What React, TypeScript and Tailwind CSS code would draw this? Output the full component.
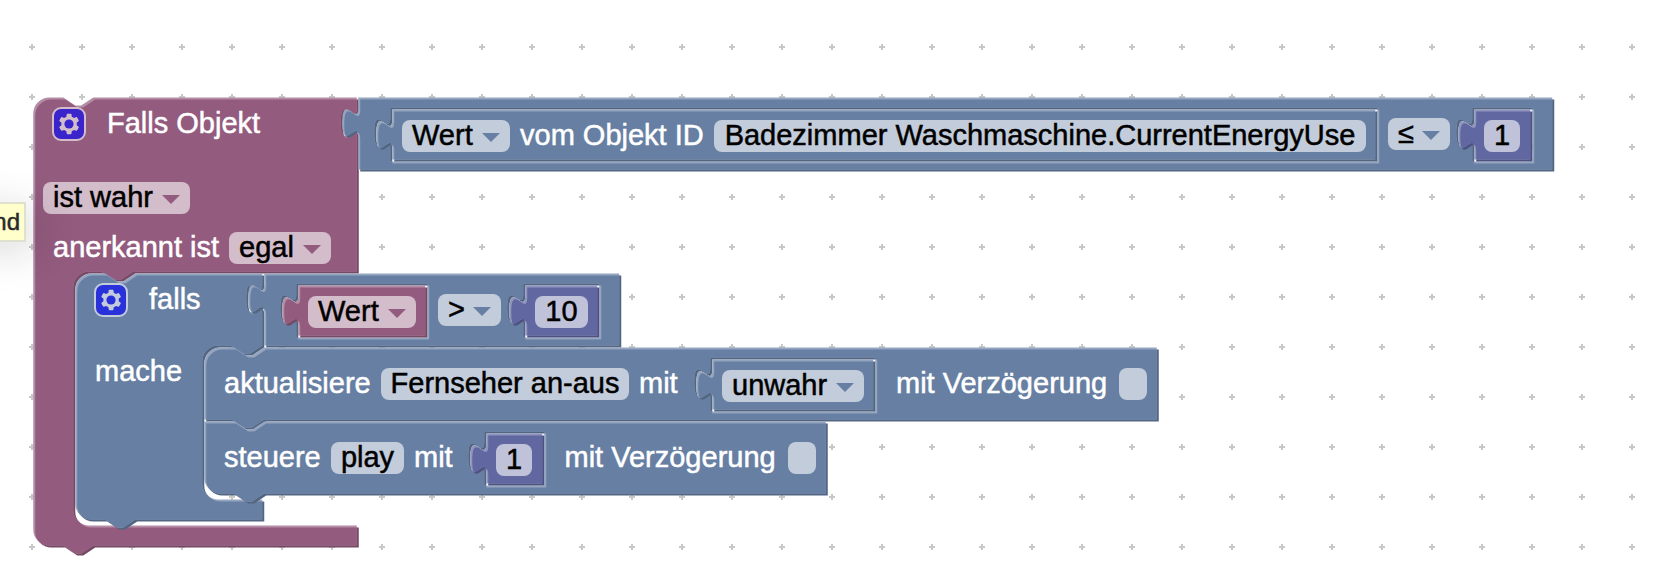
import { useId } from "react"
import type { ReactNode } from "react"

const palette = {
  trigger: { base: "#935b7e", light: "#b38ca5", dark: "#764965" },
  logic: { base: "#677fa3", light: "#95a5bf", dark: "#526682" },
  math: { base: "#6067a1", light: "#9095bd", dark: "#4d5281" },
}

type Tone = keyof typeof palette

// shape fragments, shared by every block outline
const NOTCH_RIGHT = "l12,8 h6 l12,-8"
const NOTCH_LEFT = "l-12,8 h-6 l-12,-8"
// 2px wider, closes the gap to a block docked underneath
const NOTCH_SEAM = "l-12,8 h-8 l-12,-8"
const TAB_DOWN = "c0,20 -16,-16 -16,15 s16,-5 16,15"
const TAB_UP = "c0,-20 -16,16 -16,-15 s16,5 16,-15"

const valuePath = (w: number, h: number) =>
  `M0,0 H${w} V${h} H0 V40 ${TAB_UP} Z`

// hole for an inline value block placed at x,y
const holePath = (x: number, y: number, w: number, h = 50) =>
  `M${x - 2},${y - 2} v10 ${TAB_DOWN} v${h - 36} h${w + 4} v${-(h + 4)} Z`

// block wrapping a statement list
const wrapPath = (w: number, top: number, bottom: number, left: number) =>
  `M0,16 A16,16 0 0 1 16,0 H30 ${NOTCH_RIGHT} H${w} V10 ${TAB_DOWN} V${top} H${left + 60} ${NOTCH_SEAM} h-12 a16,16 0 0 0 -16,16 V${bottom - 16} a16,16 0 0 0 16,16 H${w} v20 H60 ${NOTCH_LEFT} H16 a16,16 0 0 1 -16,-16 Z`

interface BlockProps {
  tone: Tone
  d: string
  className: string
  children?: ReactNode
}

const Block = ({ tone, d, className, children }: BlockProps) => {
  const id = useId()
  const { base, light, dark } = palette[tone]

  return (
    <div className={`absolute ${className}`}>
      <svg width="1" height="1" className="absolute left-0 top-0 overflow-visible">
        <clipPath id={id}>
          <path d={d} clipRule="evenodd" />
        </clipPath>
        <g transform="translate(-0.75 -0.5)" fillRule="evenodd">
          <path d={d} fill={dark} transform="translate(2 2)" />
          <path d={d} fill={light} />
          <g clipPath={`url(#${id})`}>
            <path d={d} fill={base} transform="translate(2 2)" />
          </g>
        </g>
      </svg>
      <div className="relative w-max">{children}</div>
    </div>
  )
}

const Label = ({ children, className = "" }: { children: string; className?: string }) => (
  <span className={`h-8 whitespace-nowrap pl-px leading-[30px] text-white ${className}`}>
    {children}
  </span>
)

const Field = ({ children, className }: { children?: string; className: string }) => (
  <div
    className={`flex h-8 justify-center whitespace-nowrap rounded-lg bg-white/60 leading-[30px] text-black ${className}`}
  >
    {children}
  </div>
)

interface DropdownProps {
  children: string
  tone: Tone
  className: string
}

const Dropdown = ({ children, tone, className }: DropdownProps) => (
  <div
    className={`flex h-8 justify-between whitespace-nowrap rounded-lg bg-white/60 px-2.5 leading-[30px] text-black ${className}`}
  >
    <span>{children}</span>
    <svg width="18" height="9" viewBox="0 0 18 9" className="mt-[12.5px] shrink-0">
      <path d="M0,0 H18 L9,9 Z" fill={palette[tone].base} />
    </svg>
  </div>
)

const Gear = () => (
  <svg width="34" height="34" viewBox="0 0 17 17" className="opacity-60">
    <rect x="0.5" y="0.5" width="16" height="16" rx="4" fill="#00f" stroke="#fff" />
    <g transform="translate(0.5 0.5)">
      <path
        fill="#fff"
        d="m4.203,7.296 0,1.368 -0.92,0.677 -0.11,0.41 0.9,1.559 0.41,0.11 1.043,-0.457 1.187,0.683 0.127,1.134 0.3,0.3 1.8,0 0.3,-0.299 0.127,-1.138 1.185,-0.682 1.046,0.458 0.409,-0.11 0.9,-1.559 -0.11,-0.41 -0.92,-0.677 0,-1.366 0.92,-0.677 0.11,-0.41 -0.9,-1.559 -0.409,-0.109 -1.046,0.458 -1.185,-0.682 -0.127,-1.138 -0.3,-0.299 -1.8,0 -0.3,0.3 -0.126,1.135 -1.187,0.682 -1.043,-0.457 -0.41,0.11 -0.899,1.559 0.108,0.409z"
      />
      <circle cx="8" cy="8" r="2.3" fill="#00f" />
    </g>
  </svg>
)

const Grid = () => (
  <svg width="1658" height="582" className="absolute left-0 top-0">
    <pattern id="grid" x="7" y="22" width="50" height="50" patternUnits="userSpaceOnUse">
      <path d="M22,25 h6 M25,22 v6" stroke="#c8c8c8" strokeWidth="2" />
    </pattern>
    <rect width="1658" height="582" fill="url(#grid)" />
  </svg>
)

const App = () => {
  return (
    <div className="relative h-[582px] w-[1658px] overflow-hidden bg-white font-['Liberation_Sans',Arial,sans-serif] text-[29px] [-webkit-text-stroke:0.5px]">
      <Grid />

      {/* Falls Objekt */}
      <Block tone="trigger" d={wrapPath(323.5, 174, 428, 40)} className="left-[34px] top-[98px]">
        <div className="flex gap-5 pl-[18px] pt-[9px]">
          <Gear />
          <Label className="mt-px">Falls Objekt</Label>
        </div>
        <div className="mt-[41px] flex pl-[9px]">
          <Dropdown tone="trigger" className="w-[146.5px]">ist wahr</Dropdown>
        </div>
        <div className="mt-[18px] flex pl-[18px]">
          <Label className="w-[177px]">anerkannt ist</Label>
          <Dropdown tone="trigger" className="w-[101.5px]">egal</Dropdown>
        </div>
      </Block>

      <Block
        tone="logic"
        d={valuePath(1194, 72) + holePath(34, 12, 983) + holePath(1116, 12, 56)}
        className="left-[359px] top-[98px]"
      >
        <div className="pl-[1029px] pt-5">
          <Dropdown tone="logic" className="w-[62px]">≤</Dropdown>
        </div>
      </Block>
      <Block tone="logic" d={valuePath(983, 50)} className="left-[393px] top-[110px]">
        <div className="flex pl-[9px] pt-2.5">
          <Dropdown tone="logic" className="w-[108px]">Wert</Dropdown>
          <Label className="ml-[9px] w-[195px]">vom Objekt ID</Label>
          <Field className="w-[652px]">Badezimmer Waschmaschine.CurrentEnergyUse</Field>
        </div>
      </Block>
      <Block tone="math" d={valuePath(56, 50)} className="left-[1475px] top-[110px]">
        <div className="pl-[9px] pt-2.5">
          <Field className="w-9">1</Field>
        </div>
      </Block>

      {/* falls / mache */}
      <Block tone="logic" d={wrapPath(187, 72, 226, 127)} className="left-[76px] top-[274px]">
        <div className="flex gap-5 pl-[18px] pt-[9px]">
          <Gear />
          <Label className="mt-px">falls</Label>
        </div>
        <div className="mt-[39px] flex pl-[18px]">
          <Label>mache</Label>
        </div>
      </Block>

      <Block
        tone="logic"
        d={valuePath(355, 72) + holePath(34, 12, 127) + holePath(261, 12, 72)}
        className="left-[265px] top-[274px]"
      >
        <div className="pl-[173px] pt-5">
          <Dropdown tone="logic" className="w-[63px]">&gt;</Dropdown>
        </div>
      </Block>
      <Block tone="trigger" d={valuePath(127, 50)} className="left-[299px] top-[286px]">
        <div className="pl-[9px] pt-2.5">
          <Dropdown tone="trigger" className="w-[108px]">Wert</Dropdown>
        </div>
      </Block>
      <Block tone="math" d={valuePath(72, 50)} className="left-[526px] top-[286px]">
        <div className="pl-[9px] pt-2.5">
          <Field className="w-[53px]">10</Field>
        </div>
      </Block>

      {/* aktualisiere */}
      <Block
        tone="logic"
        d={
          `M0,16 A16,16 0 0 1 16,0 H30 ${NOTCH_RIGHT} H952.5 V72 H60 ${NOTCH_SEAM} H0 Z` +
          holePath(508, 12, 161)
        }
        className="left-[205px] top-[348px]"
      >
        <div className="flex pl-[18px] pt-5">
          <Label className="w-[158px]">aktualisiere</Label>
          <Field className="w-[248px]">Fernseher an-aus</Field>
          <Label className="ml-[9px] w-[257px]">mit</Label>
          <Label className="w-[224px]">mit Verzögerung</Label>
          <Field className="w-7" />
        </div>
      </Block>
      <Block tone="logic" d={valuePath(161, 50)} className="left-[713px] top-[360px]">
        <div className="pl-[9px] pt-2.5">
          <Dropdown tone="logic" className="w-[142px]">unwahr</Dropdown>
        </div>
      </Block>

      {/* steuere */}
      <Block
        tone="logic"
        d={
          `M0,0 H30 ${NOTCH_RIGHT} H621.5 V72 H60 ${NOTCH_LEFT} H16 A16,16 0 0 1 0,56 Z` +
          holePath(282, 12, 56)
        }
        className="left-[205px] top-[422px]"
      >
        <div className="flex pl-[18px] pt-5">
          <Label className="w-[108px]">steuere</Label>
          <Field className="w-[73px]">play</Field>
          <Label className="ml-[9px] w-[150.5px]">mit</Label>
          <Label className="w-[224px]">mit Verzögerung</Label>
          <Field className="w-7" />
        </div>
      </Block>
      <Block tone="math" d={valuePath(56, 50)} className="left-[487px] top-[434px]">
        <div className="pl-[9px] pt-2.5">
          <Field className="w-9">1</Field>
        </div>
      </Block>

      {/* tooltip running in from the left */}
      <div className="absolute -left-10 top-[202px] h-10 w-[66px] border-2 border-[#ddddcc] bg-[#ffffc7] pr-1 text-right text-2xl leading-[35px] text-[#111] opacity-90 shadow-[8px_8px_40px_2px_rgba(0,0,0,0.15)]">
        nd
      </div>
    </div>
  )
}

export default App
